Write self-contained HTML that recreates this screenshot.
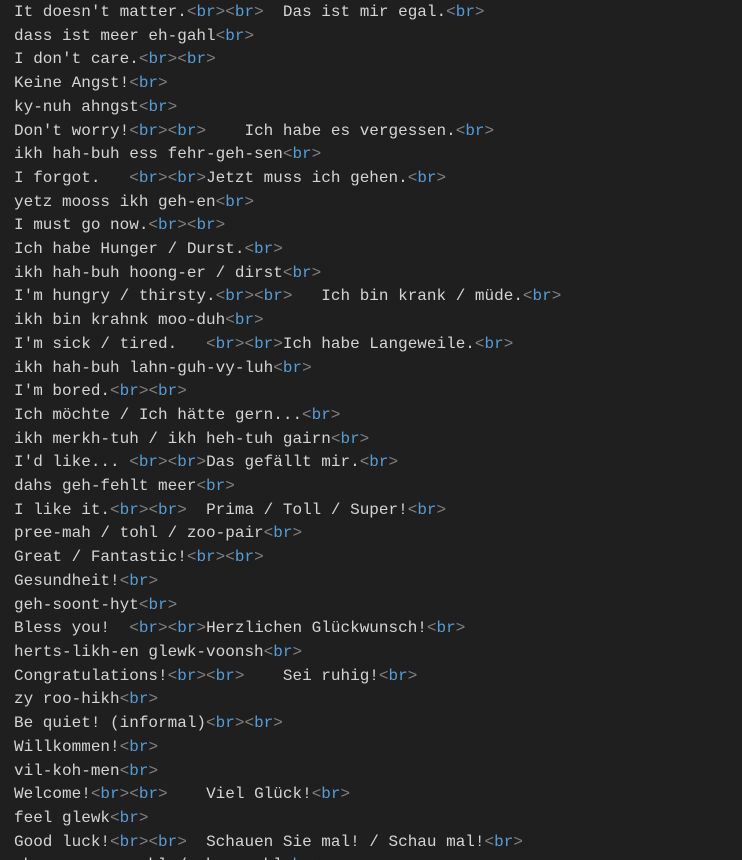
<!DOCTYPE html>
<html><head><meta charset="utf-8"><style>
html,body{margin:0;padding:0;background:#1f1f1f;width:742px;height:860px;overflow:hidden}
pre{margin:0;padding:1px 0 0 14px;font-family:"Liberation Mono",monospace;font-size:16px;line-height:23.7px;color:#d4d4d4;white-space:pre}
.t{color:#808080}.b{color:#569cd6}
</style></head><body><pre id="p"></pre>
<script>
var L=["It doesn't matter.<br><br>  Das ist mir egal.<br>","dass ist meer eh-gahl<br>","I don't care.<br><br>","Keine Angst!<br>","ky-nuh ahngst<br>","Don't worry!<br><br>    Ich habe es vergessen.<br>","ikh hah-buh ess fehr-geh-sen<br>","I forgot.   <br><br>Jetzt muss ich gehen.<br>","yetz mooss ikh geh-en<br>","I must go now.<br><br>","Ich habe Hunger / Durst.<br>","ikh hah-buh hoong-er / dirst<br>","I'm hungry / thirsty.<br><br>   Ich bin krank / müde.<br>","ikh bin krahnk moo-duh<br>","I'm sick / tired.   <br><br>Ich habe Langeweile.<br>","ikh hah-buh lahn-guh-vy-luh<br>","I'm bored.<br><br>","Ich möchte / Ich hätte gern...<br>","ikh merkh-tuh / ikh heh-tuh gairn<br>","I'd like... <br><br>Das gefällt mir.<br>","dahs geh-fehlt meer<br>","I like it.<br><br>  Prima / Toll / Super!<br>","pree-mah / tohl / zoo-pair<br>","Great / Fantastic!<br><br>","Gesundheit!<br>","geh-soont-hyt<br>","Bless you!  <br><br>Herzlichen Glückwunsch!<br>","herts-likh-en glewk-voonsh<br>","Congratulations!<br><br>    Sei ruhig!<br>","zy roo-hikh<br>","Be quiet! (informal)<br><br>","Willkommen!<br>","vil-koh-men<br>","Welcome!<br><br>    Viel Glück!<br>","feel glewk<br>","Good luck!<br><br>  Schauen Sie mal! / Schau mal!<br>","shou-en zee mahl / shou mahl<br>"];
var h=L.map(function(s){return s.replace(/&/g,'&amp;').replace(/<br>/g,'\u0001').replace(/</g,'&lt;').replace(/\u0001/g,'<span class="t">&lt;</span><span class="b">br</span><span class="t">&gt;</span>');}).join('\n');
document.getElementById('p').innerHTML=h;
</script></body></html>
